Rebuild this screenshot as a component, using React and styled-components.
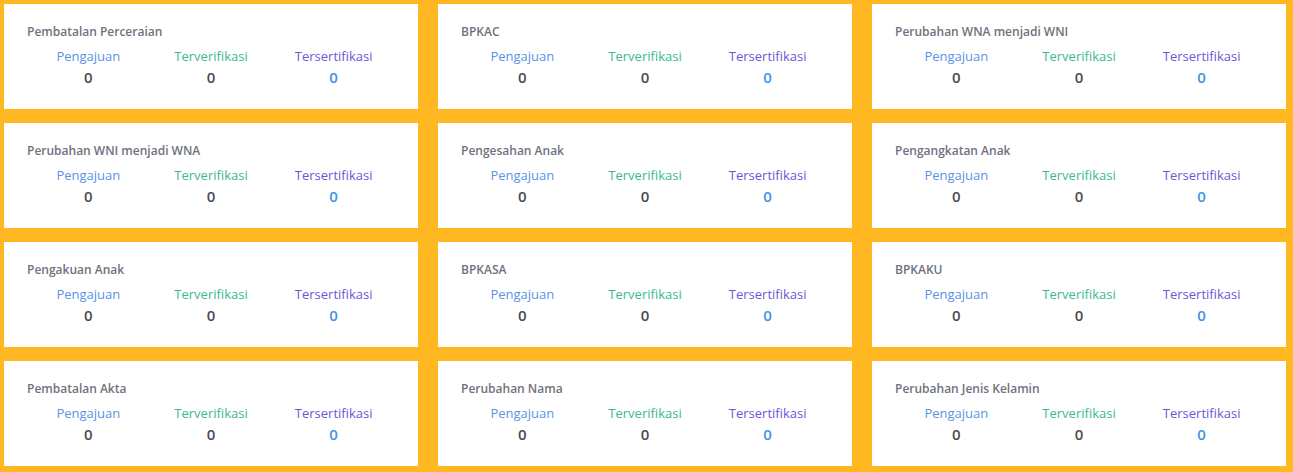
import React from 'react';
import styled, { createGlobalStyle } from 'styled-components';

const GlobalStyle = createGlobalStyle`
  html, body {
    margin: 0;
    padding: 0;
    background: #ffb822;
  }
`;

// Page grid holding the stat cards
const Page = styled.div`
  display: grid;
  grid-template-columns: repeat(3, 414px);
  grid-auto-rows: 104.5px;
  column-gap: 20px;
  row-gap: 14.5px;
  padding: 4px 0 0 4px;
  width: 1293px;
  height: 472px;
  box-sizing: border-box;
  font-family: 'Open Sans', 'Liberation Sans', sans-serif;
`;

const Card = styled.div`
  background: #ffffff;
  padding: 19px 23px 0 23px;
  box-sizing: border-box;
`;

const Title = styled.div`
  font-size: 12px;
  font-weight: 600;
  color: #6f727d;
  line-height: 18px;
`;

const Stats = styled.div`
  display: grid;
  grid-template-columns: repeat(3, 1fr);
  margin-top: 6px;
`;

const Stat = styled.div`
  display: flex;
  flex-direction: column;
  align-items: center;
`;

const Label = styled.div`
  font-size: 13px;
  line-height: 18px;
  color: ${(p) => p.color};
`;

const Value = styled.div`
  font-size: 15px;
  font-weight: 600;
  line-height: 22px;
  margin-top: 1px;
  color: ${(p) => p.color || '#4a4b52'};
`;

const services = [
  'Pembatalan Perceraian',
  'BPKAC',
  'Perubahan WNA menjadi WNI',
  'Perubahan WNI menjadi WNA',
  'Pengesahan Anak',
  'Pengangkatan Anak',
  'Pengakuan Anak',
  'BPKASA',
  'BPKAKU',
  'Pembatalan Akta',
  'Perubahan Nama',
  'Perubahan Jenis Kelamin',
];

const StatCard = ({ title }) => (
  <Card>
    <Title>{title}</Title>
    <Stats>
      <Stat>
        <Label color="#5b93e6">Pengajuan</Label>
        <Value>0</Value>
      </Stat>
      <Stat>
        <Label color="#3bb98c">Terverifikasi</Label>
        <Value>0</Value>
      </Stat>
      <Stat>
        <Label color="#6f55d8">Tersertifikasi</Label>
        <Value color="#3d94ea">0</Value>
      </Stat>
    </Stats>
  </Card>
);

const App = () => (
  <>
    <GlobalStyle />
    <Page>
      {services.map((s) => (
        <StatCard key={s} title={s} />
      ))}
    </Page>
  </>
);

export default App;
